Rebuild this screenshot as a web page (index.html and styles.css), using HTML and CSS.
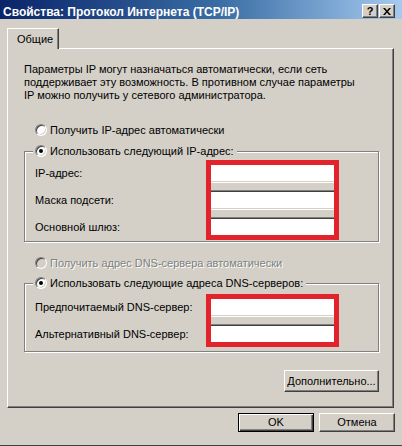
FILE: index.html
```html
<!DOCTYPE html>
<html lang="ru">
<head>
<meta charset="utf-8">
<title>Свойства: Протокол Интернета (TCP/IP)</title>
<link rel="stylesheet" href="styles.css">
</head>
<body>
<div class="window">
  <div class="titlebar">
    <span class="title">Свойства: Протокол Интернета (TCP/IP)</span>
    <div class="ctrls">
      <span class="cbtn cbtn-help">?</span>
      <span class="cbtn cbtn-close"><svg width="8" height="7" viewBox="0 0 8 7"><path d="M0 0h2l2 2.5L6 0h2L5 3.5 8 7H6L4 4.5 2 7H0l3-3.5z" fill="#000"/></svg></span>
    </div>
  </div>
  <div class="client">
    <div class="tabs"><div class="tab">Общие</div></div>
    <div class="panel">
      <p class="intro">Параметры IP могут назначаться автоматически, если сеть<br>поддерживает эту возможность. В противном случае параметры<br>IP можно получить у сетевого администратора.</p>
      <div class="opt opt-auto"><span class="radio"></span>Получить IP-адрес автоматически</div>
      <fieldset class="group group-ip">
        <legend class="opt"><span class="radio checked"></span>Использовать следующий IP-адрес:</legend>
        <div class="rows">
          <div class="labels">
            <span class="lbl">IP-адрес:</span>
            <span class="lbl">Маска подсети:</span>
            <span class="lbl">Основной шлюз:</span>
          </div>
          <div class="fields">
            <span class="field"></span>
            <span class="field"></span>
            <span class="field"></span>
          </div>
        </div>
      </fieldset>
      <div class="opt opt-dns disabled"><span class="radio"></span>Получить адрес DNS-сервера автоматически</div>
      <fieldset class="group group-dns">
        <legend class="opt"><span class="radio checked"></span>Использовать следующие адреса DNS-серверов:</legend>
        <div class="rows">
          <div class="labels">
            <span class="lbl">Предпочитаемый DNS-сервер:</span>
            <span class="lbl">Альтернативный DNS-сервер:</span>
          </div>
          <div class="fields">
            <span class="field"></span>
            <span class="field"></span>
          </div>
        </div>
      </fieldset>
      <div class="adv-row"><span class="btn btn-adv">Дополнительно...</span></div>
    </div>
    <div class="buttons">
      <span class="btn btn-default">OK</span>
      <span class="btn">Отмена</span>
    </div>
  </div>
</div>
</body>
</html>
```
FILE: styles.css
```css
* { box-sizing: border-box; }
html, body { margin: 0; padding: 0; }
body {
  background: #d4d0c8;
  font-family: "Liberation Sans", Arial, sans-serif;
  font-size: 11px;
  line-height: 13px;
  color: #000;
}
.window {
  width: 402px;
  height: 446px;
  background: #d4d0c8;
  border-bottom: 1px solid #404040;
  overflow: hidden;
}
.titlebar {
  height: 19px;
  display: flex;
  align-items: flex-start;
  background: linear-gradient(to right, #0a246a 0%, #3a6ea5 55%, #a6caf0 100%);
  padding: 5px 0 0 3px;
}
.title {
  flex: 1;
  color: #fff;
  font-weight: bold;
  font-size: 12px;
  line-height: 14px;
  white-space: nowrap;
}
.ctrls {
  display: flex;
  margin-top: -1px;
  margin-right: 7px;
}
.cbtn {
  width: 16px;
  height: 14px;
  display: flex;
  align-items: center;
  justify-content: center;
  background: #d4d0c8;
  border: 1px solid;
  border-color: #fff #404040 #404040 #fff;
  box-shadow: inset -1px -1px #808080;
  font-weight: bold;
  font-size: 11px;
  line-height: 12px;
}
.cbtn-close { margin-left: 1px; }
.client {
  padding-top: 9px;
}
.tabs {
  display: flex;
  padding-left: 7px;
}
.tab {
  position: relative;
  z-index: 1;
  width: 52px;
  height: 21px;
  margin-bottom: -1px;
  padding: 4px 0 0 9px;
  background: #d4d0c8;
  border-top: 1px solid #fff;
  border-left: 1px solid #fff;
  border-right: 1px solid #404040;
  box-shadow: inset -1px 0 #808080;
}
.panel {
  margin-left: 7px;
  width: 387px;
  height: 360px;
  border: 1px solid;
  border-color: #fff #404040 #404040 #fff;
  box-shadow: inset -1px -1px #808080;
  padding: 14px 14px 0 16px;
}
.intro {
  margin: 0;
  white-space: nowrap;
}
.opt {
  display: flex;
  align-items: center;
  height: 16px;
  white-space: nowrap;
}
.opt-auto { margin: 20px 0 0 11px; }
.radio {
  width: 12px;
  height: 12px;
  margin-right: 3px;
  border-radius: 50%;
  background: #fff;
  border: 1px solid;
  border-color: #808080 #fff #fff #808080;
  box-shadow: inset 1px 1px #404040, inset -1px -1px #d4d0c8;
  display: flex;
  align-items: center;
  justify-content: center;
  flex: none;
}
.radio.checked::after {
  content: "";
  width: 4px;
  height: 4px;
  border-radius: 50%;
  background: #000;
}
.disabled { color: #808080; text-shadow: 1px 1px 0 #fff; }
.disabled .radio { background: #d4d0c8; }
.group {
  margin: 5px 0 0 0;
  min-width: 0;
  border: 1px solid #808080;
  box-shadow: inset 1px 1px #fff, 1px 1px #fff;
  padding: 4px 0 4px 10px;
}
.group legend {
  padding: 0 3px 0 2px;
  margin-left: -2px;
  background: #d4d0c8;
}
.rows {
  display: grid;
  grid-template-columns: 174px 127px;
}
.labels, .fields {
  display: flex;
  flex-direction: column;
  gap: 7px;
}
.lbl {
  height: 20px;
  line-height: 20px;
  white-space: nowrap;
}
.fields {
  outline: 5px solid #e3232b;
  outline-offset: -2px;
}
.field {
  display: block;
  height: 20px;
  background: #fff;
  border: 1px solid;
  border-color: #808080 #fff #fff #808080;
  box-shadow: inset 1px 1px #404040, inset -1px -1px #d4d0c8;
}
.opt-dns { margin: 13px 0 0 11px; }
.group-dns { margin-top: 4px; padding-top: 6px; padding-bottom: 7px; }
.adv-row {
  display: flex;
  justify-content: flex-end;
  margin-top: 18px;
}
.btn {
  display: flex;
  align-items: center;
  justify-content: center;
  width: 76px;
  height: 19px;
  background: #d4d0c8;
  border: 1px solid;
  border-color: #fff #404040 #404040 #fff;
  box-shadow: inset -1px -1px #808080;
  white-space: nowrap;
}
.btn-adv { width: 95px; height: 22px; }
.btn-default {
  border-color: #000;
  box-shadow: inset 1px 1px #fff, inset -1px -1px #404040, inset -2px -2px #808080;
}
.buttons {
  display: flex;
  justify-content: flex-end;
  gap: 5px;
  padding-right: 7px;
  margin-top: 5px;
}
```
